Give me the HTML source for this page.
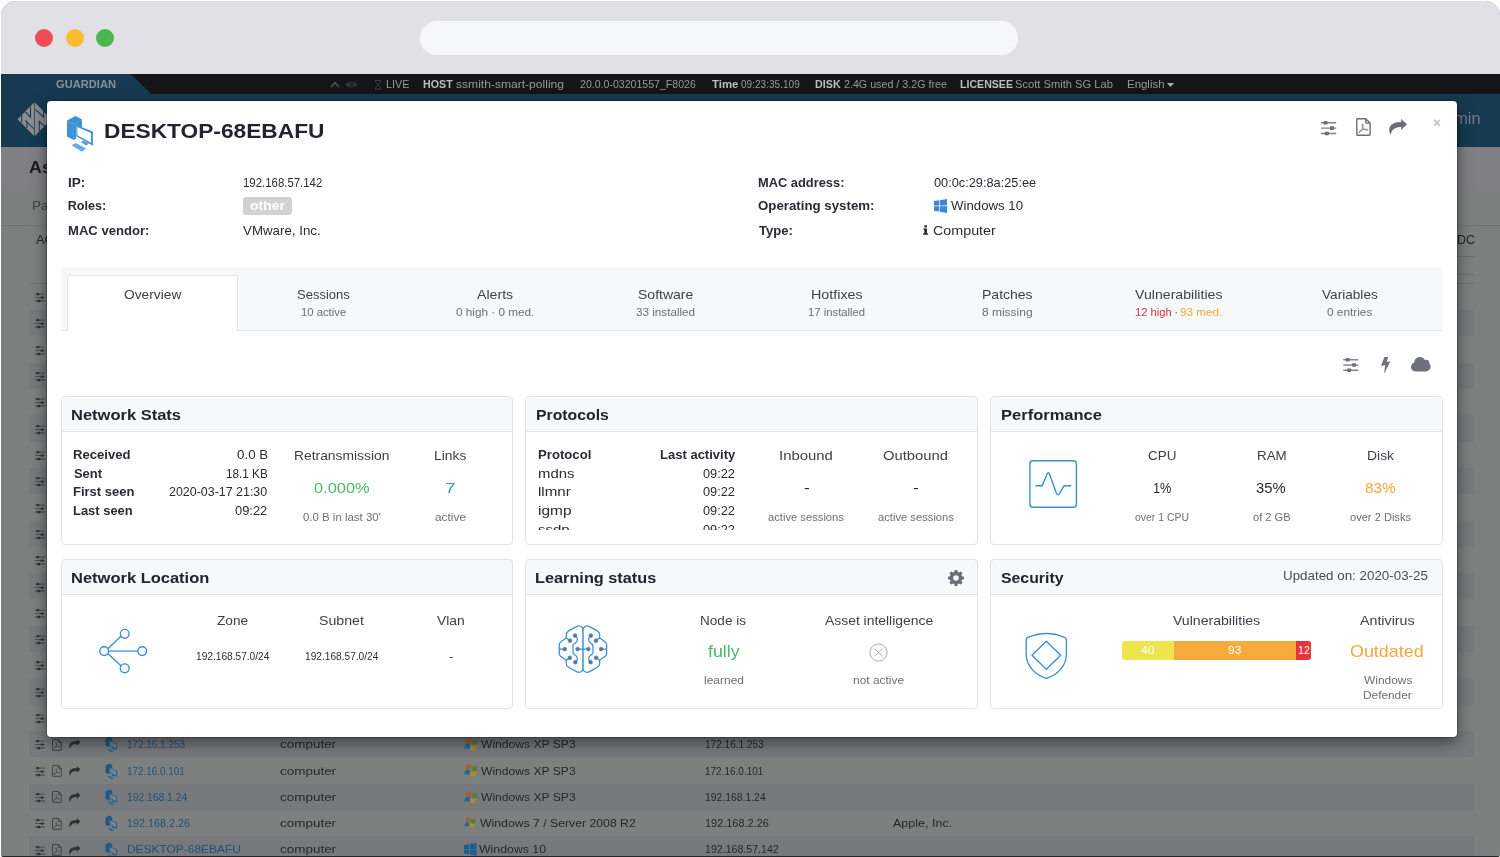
<!DOCTYPE html>
<html lang="en">
<head>
<meta charset="utf-8">
<title>Guardian - Assets - DESKTOP-68EBAFU</title>
<style>
*{box-sizing:border-box;margin:0;padding:0}
html,body{width:1500px;height:857px;overflow:hidden;background:#fff}
body{font-family:"Liberation Sans",sans-serif;position:relative;color:#2b2b36}
h1,h2{font-size:inherit;font-weight:inherit;margin:0}
.t{position:absolute;white-space:pre;line-height:1;transform-origin:0 50%;display:block}
.ic{position:absolute;display:block;overflow:visible}
.sprite{position:absolute;width:0;height:0;overflow:hidden}
.window{will-change:transform;position:absolute;left:1px;top:1px;width:1499px;height:856px;border-radius:15px 15px 3px 3px;overflow:hidden;background:#7f8181}
.window>*{margin-left:-1px;margin-top:-1px}
.chrome{position:absolute;left:0;top:0;width:1500px;height:75px;background:#e1e0e7}
.dot{position:absolute;top:28.8px;width:18.4px;height:18.4px;border-radius:50%}
.dot.r{left:34.9px;background:#ee4e53}.dot.y{left:65.5px;background:#fbbc2e}.dot.g{left:95.5px;background:#4bb64f}
.url{position:absolute;left:420.3px;top:21.2px;width:598.1px;height:33.6px;border-radius:16.8px;background:#f6f7fb}
.app{position:absolute;left:0;top:74px;width:1500px;height:783px;background:#7e807f}
.statusbar{position:absolute;left:0;top:0;width:1500px;height:20px;background:#151419}
.brandtab{position:absolute;left:0;top:0;width:152px;height:20px;background:#163a52;clip-path:polygon(0 0,130.7px 0,151.3px 100%,0 100%)}
.nav{position:absolute;left:0;top:20px;width:1500px;height:53px;background:#163a52}
.titlebar{position:absolute;left:0;top:73px;width:1500px;height:40px;background:#7f7f84}
.page{position:absolute;left:0;top:113px;width:1500px;height:670px;background:#7e807f}
.filterbar{position:absolute;left:0;top:0;width:1500px;height:38.5px;border-bottom:1.5px solid #727575}
.thead{position:absolute;left:0;top:38.5px;width:1500px;height:59px}
.thead:after{content:"";position:absolute;left:29px;top:57.5px;width:1445px;height:1px;background:#6f7272}
.hl{position:absolute;left:1456px;width:18px;height:1px;background:#6b6d6d}
.rows{position:absolute;left:0;top:0;width:1500px;height:670px}
.row{position:absolute;left:29px;width:1445px;height:26.31px}
.row.odd{background:#78797c}
.bottomline{position:absolute;left:0;top:781.6px;width:1500px;height:2px;background:#23272b}
.modal{position:absolute;left:47px;top:101px;width:1409.5px;height:636.4px;background:#fff;border-radius:4px;box-shadow:0 5px 15px rgba(0,0,0,.5),0 0 0 1px rgba(0,0,0,.2)}
.mhead,.info,.toolbar{position:absolute;left:0;top:0;width:100%;height:0}
.badge{position:absolute;background:#d2d2d3;border-radius:3px}
.tabs{position:absolute;left:14px;top:166px;width:1381.3px;height:64px;background:#f7f8fa;border-bottom:1px solid #e3e4e8}
.tab{position:absolute;top:8px;width:171px;height:56px}
.tab.active{width:170.6px;background:#fff;border-radius:3px 3px 0 0;height:56px}
.tab.active:after{content:"";position:absolute;inset:0;border:1px solid #e6e7eb;border-bottom:0;border-radius:3px 3px 0 0}
.card{position:absolute;background:#fff;border-radius:4px}
.card:after{content:"";position:absolute;inset:0;border:1px solid #e2e3e7;border-radius:4px;pointer-events:none}
.chead{position:absolute;left:0;top:0;width:100%;height:35.8px;background:#f7f8fa;border-bottom:1px solid #e2e3e7;border-radius:4px 4px 0 0}
.scroll{position:absolute;overflow:hidden}
.vbar{position:absolute;border-radius:3px;overflow:hidden;display:flex}
.vbar b{display:block;height:100%}
.vbar .lo{background:#ede54b}.vbar .me{background:#f4ab3c}.vbar .hi{background:#e5353f}

</style>
</head>
<body>
<svg class="sprite" aria-hidden="true">
<defs>
<symbol id="i-sliders" viewBox="0 0 16 15" overflow="visible">
<path d="M0 1.15h16v1.5H0z M0 6.75h16v1.5H0z M0 12.35h16v1.5H0z" opacity="0.85"/>
<rect x="2.7" y="0" width="4.2" height="3.8" rx="0.7"/><rect x="9.4" y="5.6" width="4.2" height="3.8" rx="0.7"/><rect x="4.1" y="11.2" width="4.2" height="3.8" rx="0.7"/>
</symbol>
<symbol id="i-pdf" viewBox="0 0 15 18" overflow="visible">
<path d="M0.8 1.4 Q0.8 0.7 1.5 0.7 H9.8 L14.2 5.1 V16.6 Q14.2 17.3 13.5 17.3 H1.5 Q0.8 17.3 0.8 16.6 Z M9.8 0.9 V4.4 Q9.8 5.1 10.5 5.1 H14" stroke-width="1.4" stroke-linejoin="round"/>
<path d="M6.5 5.9 C7.3 5.8 7.2 8.2 6.7 9.900000000000001 C6 12 4 15.2 3 14.9 C2.2 14.5 4 12.6 6.3 11.8 C8.6 11 12 11 12 12 C12 13 9 12.2 7.6 10.8 C6.2 9.3 5.7 6 6.5 5.9Z" stroke-width="0.75"/>
</symbol>
<symbol id="i-share" viewBox="0 0 18 15.7" overflow="visible">
<path d="M12.2 0 L18 5.3 L12.2 11 V8 C6.5 8 3 10 1.5 15.7 C-0.9 11 -0.6 3 12.2 3 Z"/>
</symbol>
<symbol id="i-gear" viewBox="0 0 16 16" overflow="visible">
<path fill-rule="evenodd" d="M6.7 0h2.6l.4 2.1 1.2.5 1.8-1.2 1.9 1.9-1.2 1.8.5 1.2 2.1.4v2.6l-2.1.4-.5 1.2 1.2 1.8-1.9 1.9-1.8-1.2-1.2.5-.4 2.1H6.700000000000001l-.4-2.1-1.2-.5-1.8 1.2-1.9-1.9 1.2-1.8-.5-1.2L0 9.3V6.7l2.1-.4.5-1.2-1.2-1.800000000000001 1.900000000000001-1.9 1.8 1.2 1.2-.5zM8 5.2a2.800000000000001 2.800000000000001 0 100 5.6 2.800000000000001 2.800000000000001 0 000-5.6z"/>
</symbol>
<symbol id="i-win10" viewBox="0 0 13 14" overflow="visible">
<path d="M0 2.1 L5.3 1.3 V6.6 H0 Z M6 1.2 L13 0 V6.6 H6 Z M0 7.3 H5.3 V12.6 L0 11.8 Z M6 7.3 H13 V14 L6 12.8 Z"/>
</symbol>
<symbol id="i-winxp" viewBox="0 0 14.4 12.5" overflow="visible">
<path d="M2.6 1.0 Q5 -0.4 7.6 1.4 L6.5 5.8 Q4 4.2 1.5 5.6 Z" fill="#9e632a"/>
<path d="M8.5 1.9 Q11 3.3 13.9 1.6 L12.7 6.2 Q10 7.8 7.4 6.3 Z" fill="#577d36"/>
<path d="M1.3 6.5 Q3.8 5.1 6.3 6.7 L5.2 11.2 Q2.6 9.6 0.1 11 Z" fill="#2b6493"/>
<path d="M7.2 7.2 Q9.8 8.7 12.5 7.1 L11.3 11.7 Q8.6 13.3 6 11.7 Z" fill="#aa8c2e"/>
</symbol>
<symbol id="i-pc" viewBox="66 115 28 38" overflow="visible">
<path d="M67 120.5 L75.5 115.9 L82 119.4 L82 128.6 L76.2 125.6 L76.2 138.6 L73.7 140 L67 136.6 Z" fill="#3a93d5"/>
<path d="M67.3 121.3 L73.7 124.4 L81.7 120.2" fill="none" stroke="#64abe2" stroke-width="0.7"/>
<path d="M73.7 124.4 V139.6" fill="none" stroke="#64abe2" stroke-width="0.6" opacity="0.7"/>
<path d="M72.3 132.4 V134.6" fill="none" stroke="#64abe2" stroke-width="0.9" opacity="0.8"/>
<path d="M76.4 125.3 L92.9 131.6 V145.8 L76.4 136.2 Z" fill="#3a93d5"/>
<path d="M77.4 126.9 L91 132.9 V142.8 L77.4 135.2 Z" fill="#fff"/>
<path d="M80.6 142 L83.2 140.8 L89 143.6 L86.200000000000003 145.4 Z" fill="#3a93d5" opacity="0.9"/>
<path d="M71.600000000000001 145.3 L75.5 142.9 L86.200000000000003 148.5 L81.7 151.7 Z" fill="#64abe2"/>
</symbol>
<symbol id="i-pc-dim" viewBox="66 115 28 38" overflow="visible">
<path d="M67 120.5 L75.5 115.9 L82 119.4 L82 128.6 L76.2 125.6 L76.2 138.6 L73.7 140 L67 136.6 Z" fill="#1e5a87"/>
<path d="M67.3 121.3 L73.7 124.4 L81.7 120.2" fill="none" stroke="#2d6a96" stroke-width="0.7"/>
<path d="M73.7 124.4 V139.6" fill="none" stroke="#2d6a96" stroke-width="0.6" opacity="0.7"/>
<path d="M72.3 132.4 V134.6" fill="none" stroke="#2d6a96" stroke-width="0.9" opacity="0.8"/>
<path d="M76.4 125.3 L92.9 131.6 V145.8 L76.4 136.2 Z" fill="#1e5a87"/>
<path d="M77.4 126.9 L91 132.9 V142.8 L77.4 135.2 Z" fill="#7d8184"/>
<path d="M80.6 142 L83.2 140.8 L89 143.6 L86.200000000000003 145.4 Z" fill="#1e5a87" opacity="0.9"/>
<path d="M71.600000000000001 145.3 L75.5 142.9 L86.200000000000003 148.5 L81.7 151.7 Z" fill="#2d6a96"/>
</symbol>
<symbol id="i-logo" viewBox="17 102 36 34" overflow="visible">
<path d="M17.6 119.2 L34.15 102.5 V135.9 Z M34.85 102.5 L51.4 119.2 L34.85 135.9 Z" fill="#8b8d8f"/>
<g fill="none" stroke="#163a52" stroke-width="1.05">
<path d="M21.7 114.6 V122.6"/>
<path d="M30.5 106.4 V117.1 L25.3 111.8"/>
<path d="M27 128 V122 L25.4 120.5 L34 129"/>
<path d="M35.4 109.4 L44 117.6"/>
<path d="M39.3 131.4 V121.4 L45.4 127"/>
<path d="M43.6 110.2 V117.6"/>
</g>
</symbol>
<symbol id="i-brain" viewBox="0 0 60 60" overflow="visible">
<g fill="none" stroke="#3a8fd6" stroke-width="1.25" stroke-linejoin="round" stroke-linecap="round">
<path d="M29.97 8.2 V50.2" stroke-width="1.5"/>
<path d="M29.97 8.6 Q27.4 4.6 23.4 6.6 L15.6 10.9 Q13.3 12.3 13.3 15 L13.3 17.9 L7.6 21.9 Q6.3 22.9 6.3 24.6 L6.3 33.6 Q6.3 35.3 7.6 36.3 L13.3 40.3 L13.3 43.4 Q13.3 46 15.6 47.3 L23.4 51.6 Q27.4 53.6 29.97 49.8"/>
<path d="M6.3 29.06 H11.8 M13.3 17.9 L17 20.6 M13.3 40.3 L16.8 37.8 M22.06 15.55 L24.16 18.2 V20.3 Q24.16 21.6 23 22.4 L21 24 Q19.96 24.8 19.96 26 V32 Q19.96 33.4 21 34.2 L23 35.8 Q24.16 36.6 24.16 38 V40 L22.4 42.2 M24.65 29.06 H29.97"/>
<g transform="translate(59.94 0) scale(-1 1)"><path d="M29.97 8.6 Q27.4 4.6 23.4 6.6 L15.6 10.9 Q13.3 12.3 13.3 15 L13.3 17.9 L7.6 21.9 Q6.3 22.9 6.3 24.6 L6.3 33.6 Q6.3 35.3 7.6 36.3 L13.3 40.3 L13.3 43.4 Q13.3 46 15.6 47.3 L23.4 51.6 Q27.4 53.6 29.97 49.8"/>
<path d="M6.3 29.06 H11.8 M13.3 17.9 L17 20.6 M13.3 40.3 L16.8 37.8 M22.06 15.55 L24.16 18.2 V20.3 Q24.16 21.6 23 22.4 L21 24 Q19.96 24.8 19.96 26 V32 Q19.96 33.4 21 34.2 L23 35.8 Q24.16 36.6 24.16 38 V40 L22.4 42.2 M24.65 29.06 H29.97"/></g>
</g>
<g fill="#6f727c" stroke="#3a8fd6" stroke-width="0.7">
<circle cx="22.06" cy="15.55" r="1.9"/><circle cx="17" cy="20.66" r="1.9"/><circle cx="11.76" cy="29.06" r="1.9"/><circle cx="24.65" cy="29.06" r="1.9"/><circle cx="16.8" cy="37.8" r="1.9"/><circle cx="22.4" cy="42.2" r="1.9"/>
<g transform="translate(59.94 0) scale(-1 1)"><circle cx="22.06" cy="15.55" r="1.9"/><circle cx="17" cy="20.66" r="1.9"/><circle cx="11.76" cy="29.06" r="1.9"/><circle cx="24.65" cy="29.06" r="1.9"/><circle cx="16.8" cy="37.8" r="1.9"/><circle cx="22.4" cy="42.2" r="1.9"/></g>
</g>
</symbol>
</defs>
</svg>
<div class="window">
<div class="chrome"><i class="dot r"></i><i class="dot y"></i><i class="dot g"></i><div class="url"></div></div>
<div class="app">
<div class="statusbar"><div class="brandtab"></div>
<span class="t" style="left:55.62px;top:5.00px;font-size:11px;transform:scaleX(1.0129);font-weight:700;color:#8d8f93;">GUARDIAN</span><svg class="ic" style="left:330px;top:7px;width:10px;height:7px" viewBox="0 0 10 7"><path d="M1 6 L5 1.6 L9 6" fill="none" stroke="#4a4a50" stroke-width="1.8"/></svg><svg class="ic" style="left:345px;top:6px;width:13px;height:9px" viewBox="0 0 13 9"><path d="M0.5 4.5 C3 0.6 10 0.6 12.5 4.5 C10 8.4 3 8.4 0.5 4.5Z" fill="#34343c"/><circle cx="6.5" cy="4.5" r="2" fill="#151419"/><circle cx="6.5" cy="4.5" r="1" fill="#34343c"/></svg><svg class="ic" style="left:374.2px;top:5.6px;width:8px;height:9.6px" viewBox="0 0 8 11" preserveAspectRatio="none"><path d="M0.7 0.6 H7.3 M0.7 10.4 H7.3 M1.5 0.8 C1.5 4 4 4.4 4 5.5 C4 6.6 1.5 7 1.5 10.2 M6.5 0.8 C6.5 4 4 4.4 4 5.5 C4 6.6 6.5 7 6.5 10.2" fill="none" stroke="#44444e" stroke-width="0.9"/></svg><span class="t" style="left:386.14px;top:5.00px;font-size:11px;transform:scaleX(0.9778);color:#97979c;">LIVE</span><span class="t" style="left:423.39px;top:5.00px;font-size:11px;transform:scaleX(0.9707);font-weight:700;color:#bdbdc2;">HOST</span><span class="t" style="left:455.73px;top:5.00px;font-size:11px;transform:scaleX(1.0974);color:#97979c;">ssmith-smart-polling</span><span class="t" style="left:579.52px;top:5.00px;font-size:11px;transform:scaleX(0.9613);color:#97979c;">20.0.0-03201557_F8026</span><span class="t" style="left:712.00px;top:5.00px;font-size:11px;transform:scaleX(1.0348);font-weight:700;color:#bdbdc2;">Time</span><span class="t" style="left:740.66px;top:5.00px;font-size:11px;transform:scaleX(0.9152);color:#97979c;">09:23:35.109</span><span class="t" style="left:815.39px;top:5.00px;font-size:11px;transform:scaleX(0.9756);font-weight:700;color:#bdbdc2;">DISK</span><span class="t" style="left:843.51px;top:5.00px;font-size:11px;transform:scaleX(0.9726);color:#97979c;">2.4G used / 3.2G free</span><span class="t" style="left:960.40px;top:5.00px;font-size:11px;transform:scaleX(0.9630);font-weight:700;color:#bdbdc2;">LICENSEE</span><span class="t" style="left:1015.49px;top:5.00px;font-size:11px;transform:scaleX(1.0131);color:#97979c;">Scott Smith SG Lab</span><span class="t" style="left:1127.09px;top:5.00px;font-size:11px;transform:scaleX(1.0397);color:#97979c;">English</span><svg class="ic" style="left:1167px;top:8.5px;width:7px;height:4px" viewBox="0 0 7 4"><path d="M0 0 H7 L3.5 4Z" fill="#a9a9ae"/></svg></div>
<div class="nav"><svg class="ic" style="left:17px;top:8px;width:36px;height:34px" viewBox="0 0 36 34"><use href="#i-logo"/></svg><span class="t" style="left:1436.40px;top:16.00px;font-size:17px;transform:scaleX(0.9636);color:#6f7c87;">admin</span></div>
<div class="titlebar"><span class="t" style="left:29.08px;top:13.00px;font-size:16px;transform:scaleX(1.1165);font-weight:700;color:#1c1c20;">Assets</span></div>
<div class="page">
<div class="filterbar"><span class="t" style="left:31.96px;top:12.00px;font-size:13px;transform:scaleX(1.0390);color:#424447;">Page</span></div><div class="thead"><span class="t" style="left:35.50px;top:7.50px;font-size:13px;transform:scaleX(0.9869);color:#222427;">ACTIONS</span><span class="t" style="left:1456.53px;top:7.50px;font-size:13px;transform:scaleX(0.9669);color:#222427;">DC</span><i class="hl" style="top:30.5px"></i><i class="hl" style="top:48px"></i></div>
<div class="rows">
<div class="row" style="top:96.8px"><svg class="ic" style="left:6px;top:9.4px;width:9.8px;height:9.2px" viewBox="0 0 16 15"><use href="#i-sliders" fill="#2f3236"/></svg><svg class="ic" style="left:23.200000000000003px;top:7.6px;width:9.8px;height:11.8px" viewBox="0 0 15 18"><use href="#i-pdf" stroke="#3a3d41" fill="none"/></svg><svg class="ic" style="left:39.8px;top:8.4px;width:11.4px;height:9.9px" viewBox="0 0 18 15.7"><use href="#i-share" fill="#2f3236"/></svg></div>
<div class="row odd" style="top:123.1px"><svg class="ic" style="left:6px;top:9.4px;width:9.8px;height:9.2px" viewBox="0 0 16 15"><use href="#i-sliders" fill="#2f3236"/></svg><svg class="ic" style="left:23.200000000000003px;top:7.6px;width:9.8px;height:11.8px" viewBox="0 0 15 18"><use href="#i-pdf" stroke="#3a3d41" fill="none"/></svg><svg class="ic" style="left:39.8px;top:8.4px;width:11.4px;height:9.9px" viewBox="0 0 18 15.7"><use href="#i-share" fill="#2f3236"/></svg></div>
<div class="row" style="top:149.4px"><svg class="ic" style="left:6px;top:9.4px;width:9.8px;height:9.2px" viewBox="0 0 16 15"><use href="#i-sliders" fill="#2f3236"/></svg><svg class="ic" style="left:23.200000000000003px;top:7.6px;width:9.8px;height:11.8px" viewBox="0 0 15 18"><use href="#i-pdf" stroke="#3a3d41" fill="none"/></svg><svg class="ic" style="left:39.8px;top:8.4px;width:11.4px;height:9.9px" viewBox="0 0 18 15.7"><use href="#i-share" fill="#2f3236"/></svg></div>
<div class="row odd" style="top:175.7px"><svg class="ic" style="left:6px;top:9.4px;width:9.8px;height:9.2px" viewBox="0 0 16 15"><use href="#i-sliders" fill="#2f3236"/></svg><svg class="ic" style="left:23.200000000000003px;top:7.6px;width:9.8px;height:11.8px" viewBox="0 0 15 18"><use href="#i-pdf" stroke="#3a3d41" fill="none"/></svg><svg class="ic" style="left:39.8px;top:8.4px;width:11.4px;height:9.9px" viewBox="0 0 18 15.7"><use href="#i-share" fill="#2f3236"/></svg></div>
<div class="row" style="top:202.0px"><svg class="ic" style="left:6px;top:9.4px;width:9.8px;height:9.2px" viewBox="0 0 16 15"><use href="#i-sliders" fill="#2f3236"/></svg><svg class="ic" style="left:23.200000000000003px;top:7.6px;width:9.8px;height:11.8px" viewBox="0 0 15 18"><use href="#i-pdf" stroke="#3a3d41" fill="none"/></svg><svg class="ic" style="left:39.8px;top:8.4px;width:11.4px;height:9.9px" viewBox="0 0 18 15.7"><use href="#i-share" fill="#2f3236"/></svg></div>
<div class="row odd" style="top:228.4px"><svg class="ic" style="left:6px;top:9.4px;width:9.8px;height:9.2px" viewBox="0 0 16 15"><use href="#i-sliders" fill="#2f3236"/></svg><svg class="ic" style="left:23.200000000000003px;top:7.6px;width:9.8px;height:11.8px" viewBox="0 0 15 18"><use href="#i-pdf" stroke="#3a3d41" fill="none"/></svg><svg class="ic" style="left:39.8px;top:8.4px;width:11.4px;height:9.9px" viewBox="0 0 18 15.7"><use href="#i-share" fill="#2f3236"/></svg></div>
<div class="row" style="top:254.7px"><svg class="ic" style="left:6px;top:9.4px;width:9.8px;height:9.2px" viewBox="0 0 16 15"><use href="#i-sliders" fill="#2f3236"/></svg><svg class="ic" style="left:23.200000000000003px;top:7.6px;width:9.8px;height:11.8px" viewBox="0 0 15 18"><use href="#i-pdf" stroke="#3a3d41" fill="none"/></svg><svg class="ic" style="left:39.8px;top:8.4px;width:11.4px;height:9.9px" viewBox="0 0 18 15.7"><use href="#i-share" fill="#2f3236"/></svg></div>
<div class="row odd" style="top:281.0px"><svg class="ic" style="left:6px;top:9.4px;width:9.8px;height:9.2px" viewBox="0 0 16 15"><use href="#i-sliders" fill="#2f3236"/></svg><svg class="ic" style="left:23.200000000000003px;top:7.6px;width:9.8px;height:11.8px" viewBox="0 0 15 18"><use href="#i-pdf" stroke="#3a3d41" fill="none"/></svg><svg class="ic" style="left:39.8px;top:8.4px;width:11.4px;height:9.9px" viewBox="0 0 18 15.7"><use href="#i-share" fill="#2f3236"/></svg></div>
<div class="row" style="top:307.3px"><svg class="ic" style="left:6px;top:9.4px;width:9.8px;height:9.2px" viewBox="0 0 16 15"><use href="#i-sliders" fill="#2f3236"/></svg><svg class="ic" style="left:23.200000000000003px;top:7.6px;width:9.8px;height:11.8px" viewBox="0 0 15 18"><use href="#i-pdf" stroke="#3a3d41" fill="none"/></svg><svg class="ic" style="left:39.8px;top:8.4px;width:11.4px;height:9.9px" viewBox="0 0 18 15.7"><use href="#i-share" fill="#2f3236"/></svg></div>
<div class="row odd" style="top:333.6px"><svg class="ic" style="left:6px;top:9.4px;width:9.8px;height:9.2px" viewBox="0 0 16 15"><use href="#i-sliders" fill="#2f3236"/></svg><svg class="ic" style="left:23.200000000000003px;top:7.6px;width:9.8px;height:11.8px" viewBox="0 0 15 18"><use href="#i-pdf" stroke="#3a3d41" fill="none"/></svg><svg class="ic" style="left:39.8px;top:8.4px;width:11.4px;height:9.9px" viewBox="0 0 18 15.7"><use href="#i-share" fill="#2f3236"/></svg></div>
<div class="row" style="top:359.9px"><svg class="ic" style="left:6px;top:9.4px;width:9.8px;height:9.2px" viewBox="0 0 16 15"><use href="#i-sliders" fill="#2f3236"/></svg><svg class="ic" style="left:23.200000000000003px;top:7.6px;width:9.8px;height:11.8px" viewBox="0 0 15 18"><use href="#i-pdf" stroke="#3a3d41" fill="none"/></svg><svg class="ic" style="left:39.8px;top:8.4px;width:11.4px;height:9.9px" viewBox="0 0 18 15.7"><use href="#i-share" fill="#2f3236"/></svg></div>
<div class="row odd" style="top:386.2px"><svg class="ic" style="left:6px;top:9.4px;width:9.8px;height:9.2px" viewBox="0 0 16 15"><use href="#i-sliders" fill="#2f3236"/></svg><svg class="ic" style="left:23.200000000000003px;top:7.6px;width:9.8px;height:11.8px" viewBox="0 0 15 18"><use href="#i-pdf" stroke="#3a3d41" fill="none"/></svg><svg class="ic" style="left:39.8px;top:8.4px;width:11.4px;height:9.9px" viewBox="0 0 18 15.7"><use href="#i-share" fill="#2f3236"/></svg></div>
<div class="row" style="top:412.5px"><svg class="ic" style="left:6px;top:9.4px;width:9.8px;height:9.2px" viewBox="0 0 16 15"><use href="#i-sliders" fill="#2f3236"/></svg><svg class="ic" style="left:23.200000000000003px;top:7.6px;width:9.8px;height:11.8px" viewBox="0 0 15 18"><use href="#i-pdf" stroke="#3a3d41" fill="none"/></svg><svg class="ic" style="left:39.8px;top:8.4px;width:11.4px;height:9.9px" viewBox="0 0 18 15.7"><use href="#i-share" fill="#2f3236"/></svg></div>
<div class="row odd" style="top:438.8px"><svg class="ic" style="left:6px;top:9.4px;width:9.8px;height:9.2px" viewBox="0 0 16 15"><use href="#i-sliders" fill="#2f3236"/></svg><svg class="ic" style="left:23.200000000000003px;top:7.6px;width:9.8px;height:11.8px" viewBox="0 0 15 18"><use href="#i-pdf" stroke="#3a3d41" fill="none"/></svg><svg class="ic" style="left:39.8px;top:8.4px;width:11.4px;height:9.9px" viewBox="0 0 18 15.7"><use href="#i-share" fill="#2f3236"/></svg></div>
<div class="row" style="top:465.1px"><svg class="ic" style="left:6px;top:9.4px;width:9.8px;height:9.2px" viewBox="0 0 16 15"><use href="#i-sliders" fill="#2f3236"/></svg><svg class="ic" style="left:23.200000000000003px;top:7.6px;width:9.8px;height:11.8px" viewBox="0 0 15 18"><use href="#i-pdf" stroke="#3a3d41" fill="none"/></svg><svg class="ic" style="left:39.8px;top:8.4px;width:11.4px;height:9.9px" viewBox="0 0 18 15.7"><use href="#i-share" fill="#2f3236"/></svg></div>
<div class="row odd" style="top:491.5px"><svg class="ic" style="left:6px;top:9.4px;width:9.8px;height:9.2px" viewBox="0 0 16 15"><use href="#i-sliders" fill="#2f3236"/></svg><svg class="ic" style="left:23.200000000000003px;top:7.6px;width:9.8px;height:11.8px" viewBox="0 0 15 18"><use href="#i-pdf" stroke="#3a3d41" fill="none"/></svg><svg class="ic" style="left:39.8px;top:8.4px;width:11.4px;height:9.9px" viewBox="0 0 18 15.7"><use href="#i-share" fill="#2f3236"/></svg></div>
<div class="row" style="top:517.8px"><svg class="ic" style="left:6px;top:9.4px;width:9.8px;height:9.2px" viewBox="0 0 16 15"><use href="#i-sliders" fill="#2f3236"/></svg><svg class="ic" style="left:23.200000000000003px;top:7.6px;width:9.8px;height:11.8px" viewBox="0 0 15 18"><use href="#i-pdf" stroke="#3a3d41" fill="none"/></svg><svg class="ic" style="left:39.8px;top:8.4px;width:11.4px;height:9.9px" viewBox="0 0 18 15.7"><use href="#i-share" fill="#2f3236"/></svg></div>
<div class="row odd" style="top:544.1px"><svg class="ic" style="left:6px;top:9.4px;width:9.8px;height:9.2px" viewBox="0 0 16 15"><use href="#i-sliders" fill="#2f3236"/></svg><svg class="ic" style="left:23.200000000000003px;top:7.6px;width:9.8px;height:11.8px" viewBox="0 0 15 18"><use href="#i-pdf" stroke="#3a3d41" fill="none"/></svg><svg class="ic" style="left:39.8px;top:8.4px;width:11.4px;height:9.9px" viewBox="0 0 18 15.7"><use href="#i-share" fill="#2f3236"/></svg><svg class="ic" style="left:76px;top:5.4px;width:12.6px;height:17.1px" viewBox="0 0 28 38"><use href="#i-pc-dim"/></svg><span class="t" style="left:98.46px;top:6.93px;font-size:11.7px;transform:scaleX(0.8490);color:#1a527c;">172.16.1.253</span><span class="t" style="left:251.42px;top:6.93px;font-size:11.7px;transform:scaleX(1.1514);color:#25272b;">computer</span><svg class="ic" style="left:434.8px;top:6.9px;width:14.4px;height:12.5px" viewBox="0 0 14.4 12.5"><use href="#i-winxp"/></svg><span class="t" style="left:452.20px;top:6.93px;font-size:11.7px;transform:scaleX(1.0361);color:#25272b;">Windows XP SP3</span><span class="t" style="left:676.25px;top:6.93px;font-size:11.7px;transform:scaleX(0.8609);color:#25272b;">172.16.1.253</span></div>
<div class="row" style="top:570.4px"><svg class="ic" style="left:6px;top:9.4px;width:9.8px;height:9.2px" viewBox="0 0 16 15"><use href="#i-sliders" fill="#2f3236"/></svg><svg class="ic" style="left:23.200000000000003px;top:7.6px;width:9.8px;height:11.8px" viewBox="0 0 15 18"><use href="#i-pdf" stroke="#3a3d41" fill="none"/></svg><svg class="ic" style="left:39.8px;top:8.4px;width:11.4px;height:9.9px" viewBox="0 0 18 15.7"><use href="#i-share" fill="#2f3236"/></svg><svg class="ic" style="left:76px;top:5.4px;width:12.6px;height:17.1px" viewBox="0 0 28 38"><use href="#i-pc-dim"/></svg><span class="t" style="left:98.46px;top:7.62px;font-size:11.7px;transform:scaleX(0.8446);color:#1a527c;">172.16.0.101</span><span class="t" style="left:251.42px;top:7.62px;font-size:11.7px;transform:scaleX(1.1514);color:#25272b;">computer</span><svg class="ic" style="left:434.8px;top:6.9px;width:14.4px;height:12.5px" viewBox="0 0 14.4 12.5"><use href="#i-winxp"/></svg><span class="t" style="left:452.20px;top:7.62px;font-size:11.7px;transform:scaleX(1.0361);color:#25272b;">Windows XP SP3</span><span class="t" style="left:676.25px;top:7.62px;font-size:11.7px;transform:scaleX(0.8550);color:#25272b;">172.16.0.101</span></div>
<div class="row odd" style="top:596.7px"><svg class="ic" style="left:6px;top:9.4px;width:9.8px;height:9.2px" viewBox="0 0 16 15"><use href="#i-sliders" fill="#2f3236"/></svg><svg class="ic" style="left:23.200000000000003px;top:7.6px;width:9.8px;height:11.8px" viewBox="0 0 15 18"><use href="#i-pdf" stroke="#3a3d41" fill="none"/></svg><svg class="ic" style="left:39.8px;top:8.4px;width:11.4px;height:9.9px" viewBox="0 0 18 15.7"><use href="#i-share" fill="#2f3236"/></svg><svg class="ic" style="left:76px;top:5.4px;width:12.6px;height:17.1px" viewBox="0 0 28 38"><use href="#i-pc-dim"/></svg><span class="t" style="left:98.43px;top:7.31px;font-size:11.7px;transform:scaleX(0.8815);color:#1a527c;">192.168.1.24</span><span class="t" style="left:251.42px;top:7.31px;font-size:11.7px;transform:scaleX(1.1514);color:#25272b;">computer</span><svg class="ic" style="left:434.8px;top:6.9px;width:14.4px;height:12.5px" viewBox="0 0 14.4 12.5"><use href="#i-winxp"/></svg><span class="t" style="left:452.20px;top:7.31px;font-size:11.7px;transform:scaleX(1.0361);color:#25272b;">Windows XP SP3</span><span class="t" style="left:676.22px;top:7.31px;font-size:11.7px;transform:scaleX(0.8889);color:#25272b;">192.168.1.24</span></div>
<div class="row" style="top:623.0px"><svg class="ic" style="left:6px;top:9.4px;width:9.8px;height:9.2px" viewBox="0 0 16 15"><use href="#i-sliders" fill="#2f3236"/></svg><svg class="ic" style="left:23.200000000000003px;top:7.6px;width:9.8px;height:11.8px" viewBox="0 0 15 18"><use href="#i-pdf" stroke="#3a3d41" fill="none"/></svg><svg class="ic" style="left:39.8px;top:8.4px;width:11.4px;height:9.9px" viewBox="0 0 18 15.7"><use href="#i-share" fill="#2f3236"/></svg><svg class="ic" style="left:76px;top:5.4px;width:12.6px;height:17.1px" viewBox="0 0 28 38"><use href="#i-pc-dim"/></svg><span class="t" style="left:98.39px;top:7.00px;font-size:11.7px;transform:scaleX(0.9217);color:#1a527c;">192.168.2.26</span><span class="t" style="left:251.42px;top:7.00px;font-size:11.7px;transform:scaleX(1.1514);color:#25272b;">computer</span><svg class="ic" style="left:434.8px;top:7.2px;width:12.6px;height:11px" viewBox="0 0 14.4 12.5"><use href="#i-winxp"/></svg><span class="t" style="left:451.00px;top:7.00px;font-size:11.7px;transform:scaleX(1.0470);color:#25272b;">Windows 7 / Server 2008 R2</span><span class="t" style="left:676.18px;top:7.00px;font-size:11.7px;transform:scaleX(0.9351);color:#25272b;">192.168.2.26</span><span class="t" style="left:863.80px;top:7.00px;font-size:11.7px;transform:scaleX(1.0716);color:#25272b;">Apple, Inc.</span></div>
<div class="row odd" style="top:649.3px"><svg class="ic" style="left:6px;top:9.4px;width:9.8px;height:9.2px" viewBox="0 0 16 15"><use href="#i-sliders" fill="#2f3236"/></svg><svg class="ic" style="left:23.200000000000003px;top:7.6px;width:9.8px;height:11.8px" viewBox="0 0 15 18"><use href="#i-pdf" stroke="#3a3d41" fill="none"/></svg><svg class="ic" style="left:39.8px;top:8.4px;width:11.4px;height:9.9px" viewBox="0 0 18 15.7"><use href="#i-share" fill="#2f3236"/></svg><svg class="ic" style="left:76px;top:5.4px;width:12.6px;height:17.1px" viewBox="0 0 28 38"><use href="#i-pc-dim"/></svg><span class="t" style="left:98.31px;top:6.69px;font-size:11.7px;transform:scaleX(1.0211);color:#1a527c;">DESKTOP-68EBAFU</span><span class="t" style="left:251.42px;top:6.69px;font-size:11.7px;transform:scaleX(1.1514);color:#25272b;">computer</span><svg class="ic" style="left:434.8px;top:6.9px;width:12.5px;height:12.5px" viewBox="0 0 13 14" preserveAspectRatio="none"><use href="#i-win10" fill="#1d5f92"/></svg><span class="t" style="left:450.00px;top:6.69px;font-size:11.7px;transform:scaleX(1.0530);color:#25272b;">Windows 10</span><span class="t" style="left:676.21px;top:6.69px;font-size:11.7px;transform:scaleX(0.9072);color:#25272b;">192.168.57.142</span></div>
</div>
</div>
<div class="bottomline"></div>
</div>
<div class="modal">
<div class="mhead"><svg class="ic" style="left:19px;top:14px;width:28px;height:38px" viewBox="0 0 28 38"><use href="#i-pc"/></svg><h1><span class="t" style="left:57.19px;top:20.00px;font-size:20.2px;transform:scaleX(1.1250);font-weight:700;color:#23232e;">DESKTOP-68EBAFU</span></h1><svg class="ic" style="left:1274.1px;top:19.900000000000006px;width:15.2px;height:14.25px" viewBox="0 0 16 15"><use href="#i-sliders" fill="#6b6c78"/></svg><svg class="ic" style="left:1309.1px;top:16.900000000000006px;width:14.9px;height:17.9px" viewBox="0 0 15 18"><use href="#i-pdf" stroke="#6b6c78" fill="none"/></svg><svg class="ic" style="left:1342.3px;top:18px;width:18px;height:15.7px" viewBox="0 0 18 15.7"><use href="#i-share" fill="#6b6c78"/></svg><svg class="ic" style="left:1385.6px;top:18px;width:7.8px;height:7.6px" viewBox="0 0 8 8"><path d="M1 1 L7 7 M7 1 L1 7" stroke="#c4c4c8" stroke-width="1.9"/></svg></div>
<div class="info">
<span class="t" style="left:20.59px;top:76.00px;font-size:12.6px;transform:scaleX(1.0761);font-weight:700;color:#2b2b36;">IP:</span><span class="t" style="left:195.61px;top:76.00px;font-size:12.6px;transform:scaleX(0.9054);color:#2b2b36;">192.168.57.142</span><span class="t" style="left:20.65px;top:99.00px;font-size:12.6px;font-weight:700;color:#2b2b36;">Roles:</span><span class="badge" style="left:195.8px;top:96.19999999999999px;width:48.8px;height:17.8px"></span><span class="t" style="left:202.56px;top:99.00px;font-size:12px;transform:scaleX(1.1661);font-weight:700;color:#fff;">other</span><span class="t" style="left:20.62px;top:124.00px;font-size:12.6px;transform:scaleX(1.0388);font-weight:700;color:#2b2b36;">MAC vendor:</span><span class="t" style="left:196.40px;top:124.00px;font-size:12.6px;transform:scaleX(1.0566);color:#2b2b36;">VMware, Inc.</span><span class="t" style="left:711.23px;top:76.00px;font-size:12.6px;transform:scaleX(1.0208);font-weight:700;color:#2b2b36;">MAC address:</span><span class="t" style="left:886.62px;top:76.00px;font-size:12.6px;transform:scaleX(1.0135);color:#2b2b36;">00:0c:29:8a:25:ee</span><span class="t" style="left:711.47px;top:99.00px;font-size:12.6px;transform:scaleX(1.0538);font-weight:700;color:#2b2b36;">Operating system:</span><svg class="ic" style="left:887px;top:98px;width:13px;height:14px" viewBox="0 0 13 14"><use href="#i-win10" fill="#3b87d0"/></svg><span class="t" style="left:903.60px;top:99.00px;font-size:12.6px;transform:scaleX(1.0501);color:#2b2b36;">Windows 10</span><span class="t" style="left:711.87px;top:124.00px;font-size:12.6px;transform:scaleX(1.0390);font-weight:700;color:#2b2b36;">Type:</span><svg class="ic" style="left:876px;top:124.4px;width:5.2px;height:9.8px" viewBox="0 0 6 11"><path d="M1.6 0 h3 v2.6 h-3z M0.6 4 h4 v5.4 h1.2 v1.6 h-5.6 v-1.6 h1.3 v-3.8 h-0.9z" fill="#2b2b36"/></svg><span class="t" style="left:886.29px;top:124.00px;font-size:12.6px;transform:scaleX(1.1350);color:#2b2b36;">Computer</span></div>
<div class="tabs">
<div class="tab active" style="left:6.0px"><span class="t" style="left:57.00px;top:13.00px;font-size:13.3px;transform:scaleX(1.0343);color:#3e3e49;">Overview</span></div><div class="tab" style="left:177.5px"><span class="t" style="left:58.46px;top:13.00px;font-size:13.3px;transform:scaleX(0.9778);color:#3e3e49;">Sessions</span><span class="t" style="left:62.03px;top:32.00px;font-size:11px;transform:scaleX(1.0262);color:#6d6d77;">10 active</span></div><div class="tab" style="left:348.5px"><span class="t" style="left:67.20px;top:13.00px;font-size:13.3px;transform:scaleX(1.0627);color:#3e3e49;">Alerts</span><span class="t" style="left:46.10px;top:32.00px;font-size:11px;transform:scaleX(1.0676);color:#6d6d77;">0 high · 0 med.</span></div><div class="tab" style="left:519.5px"><span class="t" style="left:57.27px;top:13.00px;font-size:13.3px;transform:scaleX(1.0537);color:#3e3e49;">Software</span><span class="t" style="left:55.40px;top:32.00px;font-size:11px;transform:scaleX(1.0618);color:#6d6d77;">33 installed</span></div><div class="tab" style="left:690.5px"><span class="t" style="left:59.12px;top:13.00px;font-size:13.3px;transform:scaleX(1.0753);color:#3e3e49;">Hotfixes</span><span class="t" style="left:56.58px;top:32.00px;font-size:11px;transform:scaleX(1.0267);color:#6d6d77;">17 installed</span></div><div class="tab" style="left:861.5px"><span class="t" style="left:59.25px;top:13.00px;font-size:13.3px;transform:scaleX(1.0538);color:#3e3e49;">Patches</span><span class="t" style="left:59.64px;top:32.00px;font-size:11px;transform:scaleX(1.0879);color:#6d6d77;">8 missing</span></div><div class="tab" style="left:1032.5px"><span class="t" style="left:41.50px;top:13.00px;font-size:13.3px;transform:scaleX(1.0634);color:#3e3e49;">Vulnerabilities</span><span class="t" style="left:41.73px;top:32.00px;font-size:11px;transform:scaleX(1.0216);color:#d9303e;">12 high</span><span class="t" style="left:80.15px;top:32.00px;font-size:11px;transform:scaleX(1.2400);color:#6d6d77;">·</span><span class="t" style="left:86.27px;top:32.00px;font-size:11px;transform:scaleX(1.0606);color:#f0a93b;">93 med.</span></div><div class="tab" style="left:1203.5px"><span class="t" style="left:57.30px;top:13.00px;font-size:13.3px;transform:scaleX(1.0246);color:#3e3e49;">Variables</span><span class="t" style="left:62.20px;top:32.00px;font-size:11px;transform:scaleX(1.0747);color:#6d6d77;">0 entries</span></div>
</div>
<div class="toolbar"><svg class="ic" style="left:1296.3px;top:257.3px;width:15.6px;height:14px" viewBox="0 0 16 15"><use href="#i-sliders" fill="#6e707c"/></svg><svg class="ic" style="left:1334px;top:256px;width:9.4px;height:17px" viewBox="0 0 9.4 17"><path d="M3.4 0 H7.2 L5.6 5 L9.4 4.2 L3 17 L4.3 8 L0 9 Z" fill="#6e707c"/></svg><svg class="ic" style="left:1363.6px;top:256px;width:19.6px;height:14.4px" viewBox="0 0 19.6 14.4"><path d="M4.6 14.4 C2 14.4 0 12.5 0 10 C0 8 1.3 6.3 3.2 5.8 C3.2 2.6 5.6 0 8.8 0 C11 0 12.9 1.2 13.8 3 C14.3 2.8 14.8 2.7 15.3 2.7 C17.2 2.7 18.6 4.3 18.3 6.2 C19.1 7 19.6 8.2 19.6 9.5 C19.6 12.2 17.5 14.4 14.9 14.4 Z" fill="#6e707c"/></svg></div>
<section class="card" style="left:14.0px;top:295.0px;width:452.0px;height:149.2px"><div class="chead"><h2><span class="t" style="left:10.11px;top:11.00px;font-size:15.2px;transform:scaleX(1.0866);font-weight:700;color:#23232e;">Network Stats</span></h2></div><div class="cbody"><span class="t" style="left:12.22px;top:53.00px;font-size:12.6px;transform:scaleX(1.0407);font-weight:700;color:#2b2b36;">Received</span><span class="t" style="left:175.60px;top:53.00px;font-size:12.6px;transform:scaleX(1.0596);color:#2b2b36;">0.0 B</span><span class="t" style="left:12.74px;top:72.00px;font-size:12.6px;transform:scaleX(1.0259);font-weight:700;color:#2b2b36;">Sent</span><span class="t" style="left:164.89px;top:72.00px;font-size:12.6px;transform:scaleX(0.9310);color:#2b2b36;">18.1 KB</span><span class="t" style="left:12.23px;top:90.00px;font-size:12.6px;transform:scaleX(1.0323);font-weight:700;color:#2b2b36;">First seen</span><span class="t" style="left:108.18px;top:90.00px;font-size:12.6px;transform:scaleX(0.9876);color:#2b2b36;">2020-03-17 21:30</span><span class="t" style="left:12.23px;top:109.00px;font-size:12.6px;transform:scaleX(1.0273);font-weight:700;color:#2b2b36;">Last seen</span><span class="t" style="left:174.32px;top:109.00px;font-size:12.6px;transform:scaleX(1.0244);color:#2b2b36;">09:22</span><span class="t" style="left:232.53px;top:53.00px;font-size:13px;transform:scaleX(1.0651);color:#3e3e49;">Retransmission</span><span class="t" style="left:252.66px;top:84.00px;font-size:15.2px;transform:scaleX(1.0798);color:#4db86a;">0.000%</span><span class="t" style="left:241.91px;top:116.00px;font-size:11px;transform:scaleX(1.0392);color:#6d6d77;">0.0 B in last 30'</span><span class="t" style="left:373.23px;top:53.00px;font-size:13px;transform:scaleX(1.0690);color:#3e3e49;">Links</span><span class="t" style="left:384.27px;top:84.00px;font-size:15.2px;transform:scaleX(1.2400);color:#3b8fd8;">7</span><span class="t" style="left:374.10px;top:116.00px;font-size:11px;transform:scaleX(1.0786);color:#6d6d77;">active</span></div></section>
<section class="card" style="left:478.0px;top:295.0px;width:453.0px;height:149.2px"><div class="chead"><h2><span class="t" style="left:10.76px;top:11.00px;font-size:15.2px;transform:scaleX(1.0400);font-weight:700;color:#23232e;">Protocols</span></h2></div><div class="cbody"><div class="scroll" style="left:11px;top:44px;width:210px;height:89.8px"><span class="t" style="left:1.92px;top:9.00px;font-size:12.6px;transform:scaleX(1.0438);font-weight:700;color:#2b2b36;">Protocol</span><span class="t" style="left:123.52px;top:9.00px;font-size:12.6px;transform:scaleX(1.0339);font-weight:700;color:#2b2b36;">Last activity</span><span class="t" style="left:1.81px;top:28.00px;font-size:12.6px;transform:scaleX(1.1848);color:#2b2b36;">mdns</span><span class="t" style="left:167.42px;top:28.00px;font-size:12.6px;transform:scaleX(1.0146);color:#2b2b36;">09:22</span><span class="t" style="left:1.80px;top:46.00px;font-size:12.6px;transform:scaleX(1.2019);color:#2b2b36;">llmnr</span><span class="t" style="left:167.42px;top:46.00px;font-size:12.6px;transform:scaleX(1.0146);color:#2b2b36;">09:22</span><span class="t" style="left:1.78px;top:65.00px;font-size:12.6px;transform:scaleX(1.2287);color:#2b2b36;">igmp</span><span class="t" style="left:167.42px;top:65.00px;font-size:12.6px;transform:scaleX(1.0146);color:#2b2b36;">09:22</span><span class="t" style="left:2.40px;top:84.00px;font-size:12.6px;transform:scaleX(1.1903);color:#2b2b36;">ssdp</span><span class="t" style="left:167.42px;top:84.00px;font-size:12.6px;transform:scaleX(1.0146);color:#2b2b36;">09:22</span></div><span class="t" style="left:254.21px;top:53.00px;font-size:13px;transform:scaleX(1.1457);color:#3e3e49;">Inbound</span><span class="t" style="left:278.69px;top:84.00px;font-size:15.2px;transform:scaleX(1.1355);color:#2b2b36;">-</span><span class="t" style="left:243.32px;top:116.00px;font-size:11px;transform:scaleX(1.0179);color:#6d6d77;">active sessions</span><span class="t" style="left:357.93px;top:53.00px;font-size:13px;transform:scaleX(1.1383);color:#3e3e49;">Outbound</span><span class="t" style="left:387.69px;top:84.00px;font-size:15.2px;transform:scaleX(1.1355);color:#2b2b36;">-</span><span class="t" style="left:352.52px;top:116.00px;font-size:11px;transform:scaleX(1.0179);color:#6d6d77;">active sessions</span></div></section>
<section class="card" style="left:943.0px;top:295.0px;width:453.0px;height:149.2px"><div class="chead"><h2><span class="t" style="left:10.71px;top:11.00px;font-size:15.2px;transform:scaleX(1.0877);font-weight:700;color:#23232e;">Performance</span></h2></div><div class="cbody"><svg class="ic" style="left:33px;top:59px;width:60px;height:60px" viewBox="0 0 60 60"><g fill="none" stroke="#3a8fd6" stroke-width="1.4" stroke-linejoin="round" stroke-linecap="round"><rect x="6.9" y="5.75" width="46.5" height="46.55" rx="3"/><path d="M12.9 30.8 H19.3 L24.1 19 Q25.35 16.4 26.6 19.2 L33.4 38.2 Q35 41.4 36.6 38.4 L41 30.8 H47.7"/></g></svg><span class="t" style="left:158.06px;top:53.00px;font-size:13px;transform:scaleX(1.0319);color:#3e3e49;">CPU</span><span class="t" style="left:162.96px;top:84.00px;font-size:15.2px;letter-spacing:-0.024px;transform:scaleX(0.8400);color:#2b2b36;">1%</span><span class="t" style="left:145.24px;top:116.00px;font-size:11px;transform:scaleX(0.9492);color:#6d6d77;">over 1 CPU</span><span class="t" style="left:266.57px;top:53.00px;font-size:13px;transform:scaleX(1.0270);color:#3e3e49;">RAM</span><span class="t" style="left:266.21px;top:84.00px;font-size:15.2px;transform:scaleX(0.9755);color:#2b2b36;">35%</span><span class="t" style="left:262.52px;top:116.00px;font-size:11px;transform:scaleX(1.0082);color:#6d6d77;">of 2 GB</span><span class="t" style="left:376.63px;top:53.00px;font-size:13px;transform:scaleX(1.0708);color:#3e3e49;">Disk</span><span class="t" style="left:374.87px;top:84.00px;font-size:15.2px;transform:scaleX(1.0102);color:#f0a93b;">83%</span><span class="t" style="left:360.02px;top:116.00px;font-size:11px;transform:scaleX(1.0075);color:#6d6d77;">over 2 Disks</span></div></section>
<section class="card" style="left:14.0px;top:458.4px;width:452.0px;height:149.2px"><div class="chead"><h2><span class="t" style="left:9.81px;top:10.60px;font-size:15.2px;transform:scaleX(1.0857);font-weight:700;color:#23232e;">Network Location</span></h2></div><div class="cbody"><svg class="ic" style="left:37px;top:69.10000000000002px;width:50px;height:46px" viewBox="98 628.5 50 46"><g fill="none" stroke="#3a8fd6" stroke-width="1.4"><path d="M108.7 651.6 H137.7 M108.1 648.9 L121.2 636.6 M108.1 654.3 L121.2 666.5"/><circle cx="104.2" cy="651.6" r="4.4"/><circle cx="124.7" cy="634.3" r="4.4"/><circle cx="142.2" cy="651.6" r="4.4"/><circle cx="124.7" cy="668.8" r="4.4"/></g></svg><span class="t" style="left:155.81px;top:54.60px;font-size:13px;transform:scaleX(1.0504);color:#3e3e49;">Zone</span><span class="t" style="left:134.51px;top:91.60px;font-size:11px;transform:scaleX(0.9223);color:#2b2b36;">192.168.57.0/24</span><span class="t" style="left:257.76px;top:54.60px;font-size:13px;transform:scaleX(1.0896);color:#3e3e49;">Subnet</span><span class="t" style="left:243.71px;top:91.60px;font-size:11px;transform:scaleX(0.9223);color:#2b2b36;">192.168.57.0/24</span><span class="t" style="left:376.10px;top:54.60px;font-size:13px;transform:scaleX(1.0653);color:#3e3e49;">Vlan</span><span class="t" style="left:387.54px;top:91.60px;font-size:11px;transform:scaleX(1.2174);color:#2b2b36;">-</span></div></section>
<section class="card" style="left:478.0px;top:458.4px;width:453.0px;height:149.2px"><div class="chead"><h2><span class="t" style="left:10.23px;top:10.60px;font-size:15.2px;transform:scaleX(1.0726);font-weight:700;color:#23232e;">Learning status</span></h2><svg class="ic" style="left:423.29999999999995px;top:10.399999999999977px;width:16px;height:16px" viewBox="0 0 16 16"><use href="#i-gear" fill="#6a6c76"/></svg></div><div class="cbody"><svg class="ic" style="left:28px;top:60.60000000000002px;width:60px;height:60px" viewBox="0 0 60 60"><use href="#i-brain"/></svg><span class="t" style="left:175.46px;top:54.60px;font-size:13px;transform:scaleX(1.0433);color:#3e3e49;">Node is</span><span class="t" style="left:182.86px;top:83.60px;font-size:16.2px;transform:scaleX(1.0991);color:#4db86a;">fully</span><span class="t" style="left:178.72px;top:115.60px;font-size:11px;transform:scaleX(1.0901);color:#6d6d77;">learned</span><span class="t" style="left:299.70px;top:54.60px;font-size:13px;transform:scaleX(1.0690);color:#3e3e49;">Asset intelligence</span><svg class="ic" style="left:344.4px;top:83.60000000000002px;width:19px;height:19px" viewBox="0 0 19 19"><circle cx="9.5" cy="9.5" r="8.6" fill="none" stroke="#a2a2aa" stroke-width="0.9"/><path d="M5.7 5.6 L13.2 13.1 M13.2 5.6 L5.7 13.1" stroke="#9c9ea6" stroke-width="0.9"/></svg><span class="t" style="left:328.02px;top:115.60px;font-size:11px;transform:scaleX(1.0840);color:#6d6d77;">not active</span></div></section>
<section class="card" style="left:943.0px;top:458.4px;width:453.0px;height:149.2px"><div class="chead"><h2><span class="t" style="left:10.91px;top:10.60px;font-size:15.2px;transform:scaleX(1.0422);font-weight:700;color:#23232e;">Security</span></h2><span class="t" style="left:293.37px;top:9.60px;font-size:13px;transform:scaleX(1.0280);color:#4b4b56;">Updated on: 2020-03-25</span></div><div class="cbody"><svg class="ic" style="left:26px;top:65.60000000000002px;width:60px;height:60px" viewBox="0 0 60 60"><g fill="none" stroke="#3a8fd6" stroke-width="1.35" stroke-linejoin="round"><path d="M10.2 15 Q10.2 13.3 11.6 12.7 C17.5 10 24 8.5 30.32 8.5 C36.6 8.5 43.1 10 49 12.7 Q50.4 13.3 50.4 15 V29.5 C50.4 40.5 42 49.5 30.32 53.5 C18.6 49.5 10.2 40.5 10.2 29.5 Z"/><path d="M30.32 16.3 L44.7 30.25 L30.32 44.2 L16 30.25 Z"/></g></svg><span class="t" style="left:183.40px;top:54.60px;font-size:13px;transform:scaleX(1.0833);color:#3e3e49;">Vulnerabilities</span><div class="vbar" style="left:131.9000000000001px;top:81.80000000000007px;width:189.6px;height:18.8px"><b class="lo" style="width:51.9px"></b><b class="me" style="width:122.1px"></b><b class="hi" style="width:15.6px"></b></div><span class="t" style="left:150.92px;top:85.60px;font-size:11px;transform:scaleX(1.1011);color:#fff;">40</span><span class="t" style="left:238.05px;top:85.60px;font-size:11px;transform:scaleX(1.0901);color:#fff;">93</span><span class="t" style="left:307.68px;top:85.60px;font-size:11px;transform:scaleX(0.9636);color:#fff;">12</span><span class="t" style="left:370.10px;top:54.60px;font-size:13px;transform:scaleX(1.0949);color:#3e3e49;">Antivirus</span><span class="t" style="left:360.37px;top:83.60px;font-size:16.2px;transform:scaleX(1.1056);color:#f0a93b;">Outdated</span><span class="t" style="left:373.70px;top:115.60px;font-size:11px;transform:scaleX(1.0847);color:#6d6d77;">Windows</span><span class="t" style="left:372.76px;top:130.60px;font-size:11px;transform:scaleX(1.0757);color:#6d6d77;">Defender</span></div></section>
</div>
</div>
</body>
</html>
